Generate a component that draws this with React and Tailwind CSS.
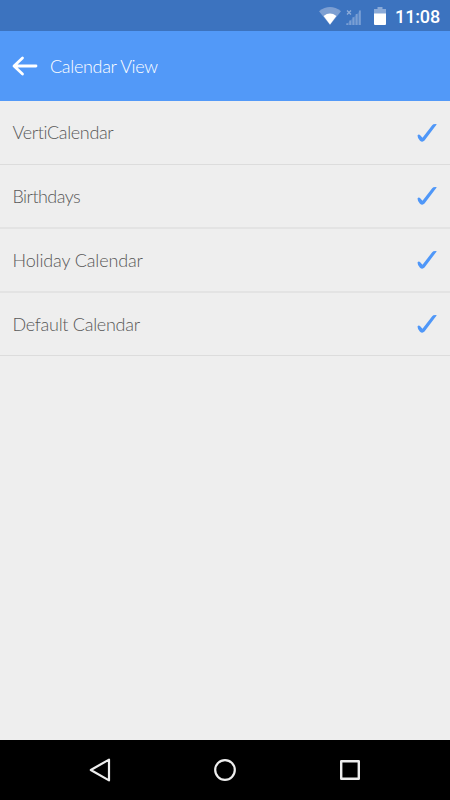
import { useState } from 'react'

const CALENDARS = [
  { id: 'verti', name: 'VertiCalendar', tracking: 'tracking-[-0.35px]', row: 'h-[64px] border-b border-[#dcdcdc]' },
  { id: 'birthdays', name: 'Birthdays', tracking: 'tracking-[-0.55px]', row: 'h-[64px] border-b-2 border-[#e3e3e3]' },
  { id: 'holiday', name: 'Holiday Calendar', tracking: 'tracking-[-0.13px]', row: 'h-[64px] border-b-2 border-[#e3e3e3]' },
  { id: 'default', name: 'Default Calendar', tracking: 'tracking-[-0.28px]', row: 'h-[63px] border-b border-[#dcdcdc]' },
]

function StatusBar() {
  return (
    <div className="h-[31px] shrink-0 bg-[#3c73bf] flex items-center justify-end pr-[10px]">
      <svg width="22" height="18" viewBox="0 0 22 18" className="mr-[5px]">
        <path d="M0 4.2Q11 -4 22 4.2L11 18Z" fill="#7d9fd2" />
        <path d="M4.6 9Q11 4.2 17.4 9L11 17.6Z" fill="#fff" />
      </svg>
      <svg width="15" height="16" viewBox="0 0 15 16" className="mt-[2px] mr-[13px]">
        <path d="M1 1.5L5 5.5M5 1.5L1 5.5" stroke="#8fadd9" strokeWidth="1.3" />
        <path d="M0 16L15 1V16Z" fill="#5686c9" />
        <path d="M1.2 16V14.2M4.2 16V11.4M7.4 16V8.2M10.6 16V5M13.8 16V1.6" stroke="#7a9fd4" strokeWidth="1.8" />
      </svg>
      <svg width="12" height="18" viewBox="0 0 12 18" className="mr-[9px]">
        <path d="M0 2H3.5V0H8.5V2H12V7H0Z" fill="#8aaad8" />
        <path d="M0 6.5H12V17Q12 18 11 18H1Q0 18 0 17Z" fill="#fff" />
      </svg>
      <span className="font-['Roboto'] font-medium text-[18px] tracking-[-0.15px] leading-[31px] text-white pt-[2px]">11:08</span>
    </div>
  )
}

function Check() {
  return (
    <svg width="22" height="20" viewBox="0 0 22 20" fill="#4f97f8">
      <path d="M1.5 12.4Q2.8 10.8 4.2 12.3L6.5 14.8L16.2 2.2Q17.3 0.8 20.8 1.2L8.5 17.6Q6.4 19.8 4 17.8Q1.5 15.2 1.5 12.4Z" />
    </svg>
  )
}

function NavBar() {
  return (
    <div className="h-[60px] shrink-0 bg-black flex items-center pl-[88px]">
      <svg width="24" height="26" viewBox="0 0 24 26" fill="none" stroke="#eee" strokeWidth="2.2" strokeLinejoin="round" className="mr-[101px]">
        <path d="M21 2.6V23.4L2.8 13Z" />
      </svg>
      <svg width="24" height="24" viewBox="0 0 24 24" fill="none" stroke="#eee" strokeWidth="2.2" className="mr-[102px]">
        <circle cx="12" cy="12" r="9.8" />
      </svg>
      <svg width="22" height="22" viewBox="0 0 22 22" fill="none" stroke="#eee" strokeWidth="2.4" strokeLinejoin="round">
        <rect x="2.2" y="2.2" width="17.6" height="17.6" />
      </svg>
    </div>
  )
}

export default function App() {
  const [visible, setVisible] = useState(CALENDARS.map(c => c.id))

  function toggle(id) {
    setVisible(v => (v.includes(id) ? v.filter(x => x !== id) : [...v, id]))
  }

  return (
    <div className="w-[450px] h-[800px] flex flex-col bg-[#eeeeee] overflow-hidden font-['Lato',sans-serif] font-light">
      <StatusBar />
      <header className="h-[70px] shrink-0 bg-[#5299f8] flex items-center pl-[12px]">
        <button type="button" aria-label="Back" className="mr-[12px]">
          <svg width="26" height="20" viewBox="0 0 26 20" fill="none" stroke="#fff" strokeWidth="2.8" strokeLinecap="round" strokeLinejoin="round">
            <path d="M24 10H2.5M10.5 2L2 10L10.5 18" />
          </svg>
        </button>
        <h1 className="text-[18px] tracking-[-0.32px] text-white whitespace-nowrap">Calendar View</h1>
      </header>

      <ul className="flex-1">
        {CALENDARS.map(c => (
          <li key={c.id} onClick={() => toggle(c.id)}
            className={`pl-[12.5px] pr-[12px] flex items-center justify-between ${c.row}`}>
            <span className={`text-[18px] text-[#585858] whitespace-nowrap ${c.tracking}`}>{c.name}</span>
            {visible.includes(c.id) && <Check />}
          </li>
        ))}
      </ul>
      <NavBar />
    </div>
  )
}
